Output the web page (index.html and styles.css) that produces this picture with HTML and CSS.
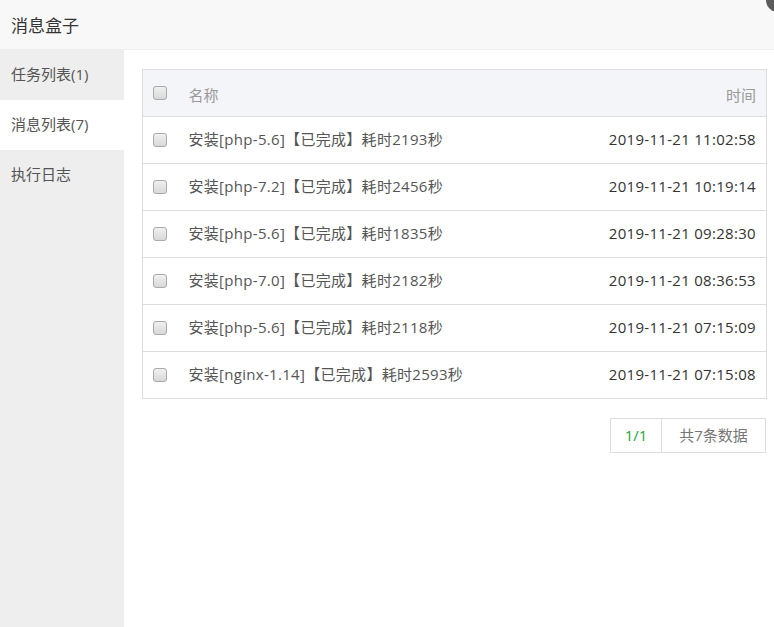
FILE: index.html
```html
<!DOCTYPE html>
<html lang="zh-CN">
<head>
<meta charset="utf-8">
<title>消息盒子</title>
<link rel="stylesheet" href="styles.css">
</head>
<body>
<div class="layer">
  <div class="layer-title">消息盒子</div>
  <span class="layer-close"></span>
  <div class="layer-body">
    <ul class="side">
      <li class="side-item">任务列表(1)</li>
      <li class="side-item active">消息列表(7)</li>
      <li class="side-item">执行日志</li>
    </ul>
    <div class="main">
      <table class="tbl">
        <thead>
          <tr><th class="c-chk"><span class="chk"></span></th><th class="c-name">名称</th><th class="c-time">时间</th></tr>
        </thead>
        <tbody>
          <tr><td class="c-chk"><span class="chk"></span></td><td class="c-name">安装[php-5.6]【已完成】耗时2193秒</td><td class="c-time">2019-11-21 11:02:58</td></tr>
          <tr><td class="c-chk"><span class="chk"></span></td><td class="c-name">安装[php-7.2]【已完成】耗时2456秒</td><td class="c-time">2019-11-21 10:19:14</td></tr>
          <tr><td class="c-chk"><span class="chk"></span></td><td class="c-name">安装[php-5.6]【已完成】耗时1835秒</td><td class="c-time">2019-11-21 09:28:30</td></tr>
          <tr><td class="c-chk"><span class="chk"></span></td><td class="c-name">安装[php-7.0]【已完成】耗时2182秒</td><td class="c-time">2019-11-21 08:36:53</td></tr>
          <tr><td class="c-chk"><span class="chk"></span></td><td class="c-name">安装[php-5.6]【已完成】耗时2118秒</td><td class="c-time">2019-11-21 07:15:09</td></tr>
          <tr><td class="c-chk"><span class="chk"></span></td><td class="c-name">安装[nginx-1.14]【已完成】耗时2593秒</td><td class="c-time">2019-11-21 07:15:08</td></tr>
        </tbody>
      </table>
      <div class="pager">
        <span class="pg-cur">1/1</span><span class="pg-total">共7条数据</span>
      </div>
    </div>
  </div>
</div>
</body>
</html>
```
FILE: styles.css
```css
* { box-sizing: border-box; }
html, body { margin: 0; padding: 0; height: 100%; }
body {
  font-family: "Open Sans", "Noto Sans CJK SC", sans-serif;
  font-size: 15px;
  color: #555;
  background: #fff;
  overflow: hidden;
}
.layer {
  position: relative;
  height: 627px;
  display: flex;
  flex-direction: column;
}
.layer-title {
  height: 50px;
  line-height: 47px;
  padding: 2px 0 0 11px;
  background: #f8f8f8;
  border-bottom: 1px solid #eee;
  font-size: 17px;
  color: #333;
}
.layer-close {
  position: absolute;
  right: -16px;
  top: -12px;
  width: 24px;
  height: 24px;
  border-radius: 50%;
  background: #5b5b5b;
}
.layer-body {
  flex: 1;
  display: flex;
}
.side {
  list-style: none;
  margin: 0;
  padding: 0;
  width: 124px;
  background: #eee;
}
.side-item {
  height: 50px;
  line-height: 49px;
  padding-left: 11px;
  color: #555;
}
.side-item.active { background: #fff; }
.main {
  flex: 1;
  padding: 19px 7px 0 18px;
}
.tbl {
  width: 100%;
  border-collapse: collapse;
  border: 1px solid #ddd;
}
.tbl tr { height: 47px; border-bottom: 1px solid #ddd; }
.tbl thead tr { background: #f3f5f8; }
.tbl th { font-weight: normal; color: #999; }
.tbl th, .tbl td { padding: 0; }
.tbl td { letter-spacing: 0.3px; }
.tbl th.c-name, .tbl th.c-time { padding-top: 3px; }
.tbl td.c-name, .tbl td.c-time { padding-bottom: 3px; }
.c-chk { width: 46px; padding-left: 10px !important; }
.c-name { text-align: left; }
.c-time { text-align: right; padding-right: 10px !important; color: #333; }
th.c-time { color: #999; }
.tbl td.c-name { color: #555; }
.chk {
  display: block;
  width: 14px;
  height: 14px;
  border: 1px solid #aaa;
  border-radius: 3px;
  background: linear-gradient(#f0f0f0, #d8d8d8);
}
.pager {
  display: flex;
  justify-content: flex-end;
  margin-top: 19px;
  margin-right: 1px;
}
.pager span {
  height: 35px;
  line-height: 33px;
  border: 1px solid #ddd;
  font-size: 15px;
}
.pg-cur {
  width: 52px;
  text-align: center;
  color: #20a53a;
}
.pg-total {
  width: 104px;
  text-align: center;
  color: #777;
  border-left: none !important;
}
```
